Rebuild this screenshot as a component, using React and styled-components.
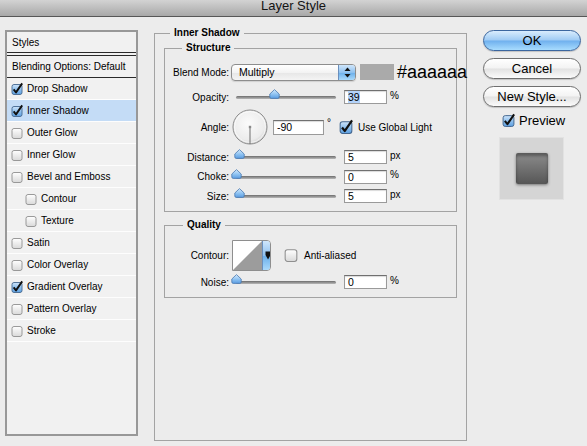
import React from "react";
import styled, { createGlobalStyle } from "styled-components";

const GlobalStyle = createGlobalStyle`
  html, body {
    margin: 0;
    padding: 0;
    background: #ececec;
  }
  body {
    font-family: "Liberation Sans", Arial, sans-serif;
    color: #000;
  }
`;

const Window = styled.div`
  width: 587px;
  height: 446px;
  overflow: hidden;
  background: #ececec;
`;

const TitleBar = styled.div`
  height: 16px;
  border-bottom: 1px solid #575757;
  background: linear-gradient(#d3d3d3, #a8a8a8);
  text-align: center;
  font-size: 13px;
  line-height: 12px;
  color: #141414;
`;

const Body = styled.div`
  display: flex;
  align-items: flex-start;
  padding: 10px 0 0 5px;
`;

const StylesPanel = styled.div`
  width: 133px;
  height: 406px;
  margin-top: 3px;
  box-sizing: border-box;
  border: 2px solid #989898;
  background: #f1f1f1;
  font-size: 10px;
`;

const StyleRow = styled.div`
  display: flex;
  align-items: center;
  gap: 4px;
  height: 22px;
  box-sizing: border-box;
  padding-left: ${p => (p.$indent ? 18 : 4)}px;
  border-bottom: 1px solid #fdfdfd;
  background: ${p => (p.$active ? "#c4dcf6" : "transparent")};
  white-space: nowrap;
`;

const HeaderRow = styled(StyleRow)`
  height: 24px;
  padding-left: 5px;
  border-bottom: 4px double #2a2a2a;
`;

const BlendRow = styled(StyleRow)`
  padding-left: 5px;
  border-bottom: 1px solid #2a2a2a;
`;

const Group = styled.fieldset`
  margin: 0;
  min-width: 0;
  box-sizing: border-box;
  border: 1px solid #a3a3a3;
  padding: ${p => p.$pad};
  margin-top: ${p => p.$mt || 0}px;
  width: ${p => p.$w}px;
  height: ${p => (p.$h ? `${p.$h}px` : "auto")};
  margin-left: ${p => p.$ml || 0}px;
`;

const GroupTitle = styled.legend`
  font-weight: bold;
  font-size: 10px;
  line-height: 12px;
  padding: 0 4px;
  margin-left: ${p => p.$offset}px;
`;

const Row = styled.div`
  display: flex;
  align-items: center;
  height: ${p => p.$h || 20}px;
  margin-top: ${p => p.$mt || 0}px;
  white-space: nowrap;
  font-size: 10px;
`;

const Label = styled.span`
  flex: none;
  width: 56px;
  text-align: right;
`;

const SelectBox = styled.div`
  flex: none;
  display: flex;
  width: 125px;
  height: 17px;
  margin-left: 2px;
  box-sizing: border-box;
  border: 1px solid #8d8d8d;
  border-radius: 4px;
  overflow: hidden;
  background: linear-gradient(#ffffff, #f3f3f3 50%, #e6e6e6 51%, #f4f4f4);
  box-shadow: 0 1px 1px rgba(0, 0, 0, 0.12);
`;

const SelectText = styled.span`
  flex: 1;
  padding-left: 7px;
  font-size: 10.5px;
  line-height: 15px;
`;

const BlueSegment = styled.span`
  flex: none;
  display: flex;
  align-items: center;
  justify-content: center;
  width: ${p => p.$w}px;
  border-left: 1px solid #6a8fbd;
  background: linear-gradient(#cfe6fb, #8fc1ef 50%, #6aaeea 51%, #a9d9fb);
`;

const Swatch = styled.span`
  flex: none;
  width: 34px;
  height: 16px;
  margin-left: 4px;
  background: #aaaaaa;
`;

const HexText = styled.span`
  margin-left: 3px;
  font-size: 18px;
  line-height: 1;
  color: #000;
`;

const Track = styled.div`
  position: relative;
  flex: none;
  width: 100px;
  height: 3px;
  margin: 1px 8px 0 7px;
  border-radius: 2px;
  background: linear-gradient(#6c6c6c, #b9b9b9);
`;

const Thumb = styled.svg`
  position: absolute;
  top: -7px;
  margin-left: -5.5px;
`;

const NumberField = styled.div`
  flex: none;
  width: ${p => p.$w || 43}px;
  height: ${p => p.$h || 14}px;
  box-sizing: border-box;
  margin-left: ${p => p.$ml || 0}px;
  padding-left: 3px;
  border: 1px solid #9a9a9a;
  border-top-color: #707070;
  background: #fff;
  box-shadow: inset 0 1px 1px rgba(0, 0, 0, 0.15);
  font-size: 10.5px;
  line-height: ${p => (p.$h || 14) - 2}px;
`;

const Selected = styled.span`
  background: #b4d3fa;
`;

const Unit = styled.span`
  margin: 0 0 ${p => p.$lift || 4}px 3px;
  font-size: 10px;
`;

const CheckLabel = styled.span`
  margin-left: ${p => p.$gap || 6}px;
  font-size: ${p => p.$size || 10}px;
`;

const ContourBox = styled.div`
  flex: none;
  display: flex;
  width: 39px;
  height: 31px;
  margin-left: 3px;
  box-sizing: border-box;
  border: 1px solid #8e8e8e;
  border-radius: 0 4px 4px 0;
  overflow: hidden;
  background: #fff;
`;

const Side = styled.div`
  width: 98px;
  margin: 3px 0 0 16px;
  display: flex;
  flex-direction: column;
`;

const PillButton = styled.button`
  height: 21px;
  padding: 0;
  border-radius: 11px;
  font-family: "Liberation Sans", Arial, sans-serif;
  font-size: 13px;
  color: #000;
  border: 1px solid ${p => (p.$primary ? "#3b669f" : "#6f6f6f")};
  background: ${p =>
    p.$primary
      ? "linear-gradient(#d9ecfd, #9fcbf4 48%, #6fb0ee 52%, #a8dcfe)"
      : "linear-gradient(#ffffff, #f3f3f3 48%, #e2e2e2 52%, #fbfbfb)"};
  box-shadow: 0 1px 1px rgba(0, 0, 0, 0.18);
  & + & {
    margin-top: 7px;
  }
`;

const PreviewRow = styled.div`
  display: flex;
  align-items: center;
  height: 15px;
  margin: 6px 0 0 19px;
`;

const PreviewBox = styled.div`
  display: flex;
  align-items: center;
  justify-content: center;
  width: 65px;
  height: 63px;
  margin: 9px 0 0 16px;
  box-sizing: border-box;
  border: 1px solid #e2e2e2;
  background: #d5d5d5;
`;

const PreviewSquare = styled.div`
  width: 32px;
  height: 31px;
  border-radius: 2px;
  background: linear-gradient(#8c8c8c, #565656);
  box-shadow: 0 1px 3px rgba(0, 0, 0, 0.45), inset 0 3px 3px rgba(0, 0, 0, 0.35);
`;

const Checkbox = ({ checked, size = 10 }) => (
  <svg width={size + 2} height={size + 2} viewBox="0 0 12 12" style={{ flex: "none", overflow: "visible" }}>
    <defs>
      <linearGradient id="cbOn" x1="0" y1="0" x2="0" y2="1">
        <stop offset="0" stopColor="#cfe5fb" />
        <stop offset="0.5" stopColor="#8fc0ee" />
        <stop offset="1" stopColor="#5d9fe0" />
      </linearGradient>
      <linearGradient id="cbOff" x1="0" y1="0" x2="0" y2="1">
        <stop offset="0" stopColor="#ffffff" />
        <stop offset="1" stopColor="#d9d9d9" />
      </linearGradient>
    </defs>
    <rect
      x="1"
      y="1.5"
      width="10"
      height="10"
      rx="2"
      fill={checked ? "url(#cbOn)" : "url(#cbOff)"}
      stroke={checked ? "#44678f" : "#8f8f8f"}
      strokeWidth="0.9"
    />
    {checked && (
      <path d="M2.6 6.4 L5 9.4 L11.2 0.4" fill="none" stroke="#111" strokeWidth="1.9" strokeLinejoin="round" />
    )}
  </svg>
);

const SliderThumb = ({ pos }) => (
  <Thumb width="11" height="10" viewBox="0 0 11 10" style={{ left: pos }}>
    <defs>
      <linearGradient id="thumbFill" x1="0" y1="0" x2="0" y2="1">
        <stop offset="0" stopColor="#d6ebfd" />
        <stop offset="0.55" stopColor="#8cc1f1" />
        <stop offset="1" stopColor="#5b9de2" />
      </linearGradient>
    </defs>
    <path
      d="M0.8 8 V5 L5.5 0.6 L10.2 5 V8 Q10.2 9.4 8.8 9.4 H2.2 Q0.8 9.4 0.8 8 Z"
      fill="url(#thumbFill)"
      stroke="#4a79b0"
      strokeWidth="0.8"
    />
  </Thumb>
);

const Slider = ({ pos }) => (
  <Track>
    <SliderThumb pos={pos} />
  </Track>
);

const AngleDial = () => (
  <svg width="36" height="38" viewBox="0 0 36 38" style={{ flex: "none", marginLeft: 3 }}>
    <defs>
      <radialGradient id="dialFill" cx="0.45" cy="0.4" r="0.6">
        <stop offset="0" stopColor="#fbfbfb" />
        <stop offset="0.8" stopColor="#ececec" />
        <stop offset="1" stopColor="#d2d2d2" />
      </radialGradient>
    </defs>
    <circle cx="18" cy="19" r="17" fill="url(#dialFill)" stroke="#8b8b8b" strokeWidth="1" />
    <circle cx="18" cy="19" r="15.5" fill="none" stroke="#ffffff" strokeWidth="0.8" opacity="0.8" />
    <line x1="18" y1="19" x2="18" y2="36" stroke="#6f6f6f" strokeWidth="1" />
    <rect x="16.8" y="17.8" width="2.4" height="2.4" fill="#8a8a8a" />
  </svg>
);

const SelectArrows = () => (
  <svg width="7" height="11" viewBox="0 0 7 11">
    <path d="M3.5 0.5 L6.5 4 H0.5 Z" fill="#111" />
    <path d="M3.5 10.5 L6.5 7 H0.5 Z" fill="#111" />
  </svg>
);

const ContourPicker = () => (
  <ContourBox>
    <svg width="29" height="29" viewBox="0 0 29 29" style={{ flex: "none" }}>
      <rect width="29" height="29" fill="#fff" />
      <path d="M0 29 L29 0 V29 Z" fill="#9c9c9c" />
    </svg>
    <BlueSegment $w={9}>
      <svg width="6" height="9" viewBox="0 0 6 9">
        <path d="M0.5 0.5 H5.5 V4 L3 8.5 L0.5 4 Z" fill="#111" />
      </svg>
    </BlueSegment>
  </ContourBox>
);

const styleItems = [
  { name: "Drop Shadow", checked: true },
  { name: "Inner Shadow", checked: true, active: true },
  { name: "Outer Glow" },
  { name: "Inner Glow" },
  { name: "Bevel and Emboss" },
  { name: "Contour", indent: true },
  { name: "Texture", indent: true },
  { name: "Satin" },
  { name: "Color Overlay" },
  { name: "Gradient Overlay", checked: true },
  { name: "Pattern Overlay" },
  { name: "Stroke" }
];

const SliderRow = ({ label, pos, value, unit, mt, h, selected }) => (
  <Row $mt={mt} $h={h}>
    <Label>{label}</Label>
    <Slider pos={pos} />
    <NumberField>{selected ? <Selected>{value}</Selected> : value}</NumberField>
    <Unit>{unit}</Unit>
  </Row>
);

const App = () => (
  <Window>
    <GlobalStyle />
    <TitleBar>Layer Style</TitleBar>
    <Body>
      <StylesPanel>
        <HeaderRow>Styles</HeaderRow>
        <BlendRow>Blending Options: Default</BlendRow>
        {styleItems.map(item => (
          <StyleRow key={item.name} $indent={item.indent} $active={item.active}>
            <Checkbox checked={item.checked} />
            <span>{item.name}</span>
          </StyleRow>
        ))}
      </StylesPanel>

      <Group $w={313} $h={414} $ml={16} $pad="3px 9px 0 9px">
        <GroupTitle $offset={6}>Inner Shadow</GroupTitle>

        <Group $w={293} $pad="8px 8px 5px 8px">
          <GroupTitle $offset={9}>Structure</GroupTitle>
          <Row>
            <Label>Blend Mode:</Label>
            <SelectBox>
              <SelectText>Multiply</SelectText>
              <BlueSegment $w={16}>
                <SelectArrows />
              </BlueSegment>
            </SelectBox>
            <Swatch />
            <HexText>#aaaaaa</HexText>
          </Row>
          <SliderRow label="Opacity:" pos={38} value="39" unit="%" mt={5} selected />
          <Row $h={38} $mt={1}>
            <Label>Angle:</Label>
            <AngleDial />
            <NumberField $w={51} $h={15} $ml={5}>-90</NumberField>
            <Unit $lift={9}>°</Unit>
            <span style={{ width: 8 }} />
            <Checkbox checked size={12} />
            <CheckLabel $gap={5}>Use Global Light</CheckLabel>
          </Row>
          <SliderRow label="Distance:" pos={3} value="5" unit="px" mt={1.5} h={19.5} />
          <SliderRow label="Choke:" pos={0} value="0" unit="%" h={19.5} />
          <SliderRow label="Size:" pos={3} value="5" unit="px" h={19.5} />
        </Group>

        <Group $w={293} $mt={7} $pad="8px 8px 5px 8px">
          <GroupTitle $offset={10}>Quality</GroupTitle>
          <Row $h={32}>
            <Label>Contour:</Label>
            <ContourPicker />
            <span style={{ width: 13 }} />
            <Checkbox size={12} />
            <CheckLabel $gap={6}>Anti-aliased</CheckLabel>
          </Row>
          <SliderRow label="Noise:" pos={0} value="0" unit="%" mt={1} />
        </Group>
      </Group>

      <Side>
        <PillButton $primary>OK</PillButton>
        <PillButton>Cancel</PillButton>
        <PillButton>New Style...</PillButton>
        <PreviewRow>
          <Checkbox checked size={11} />
          <CheckLabel $gap={4} $size={13}>Preview</CheckLabel>
        </PreviewRow>
        <PreviewBox>
          <PreviewSquare />
        </PreviewBox>
      </Side>
    </Body>
  </Window>
);

export default App;
